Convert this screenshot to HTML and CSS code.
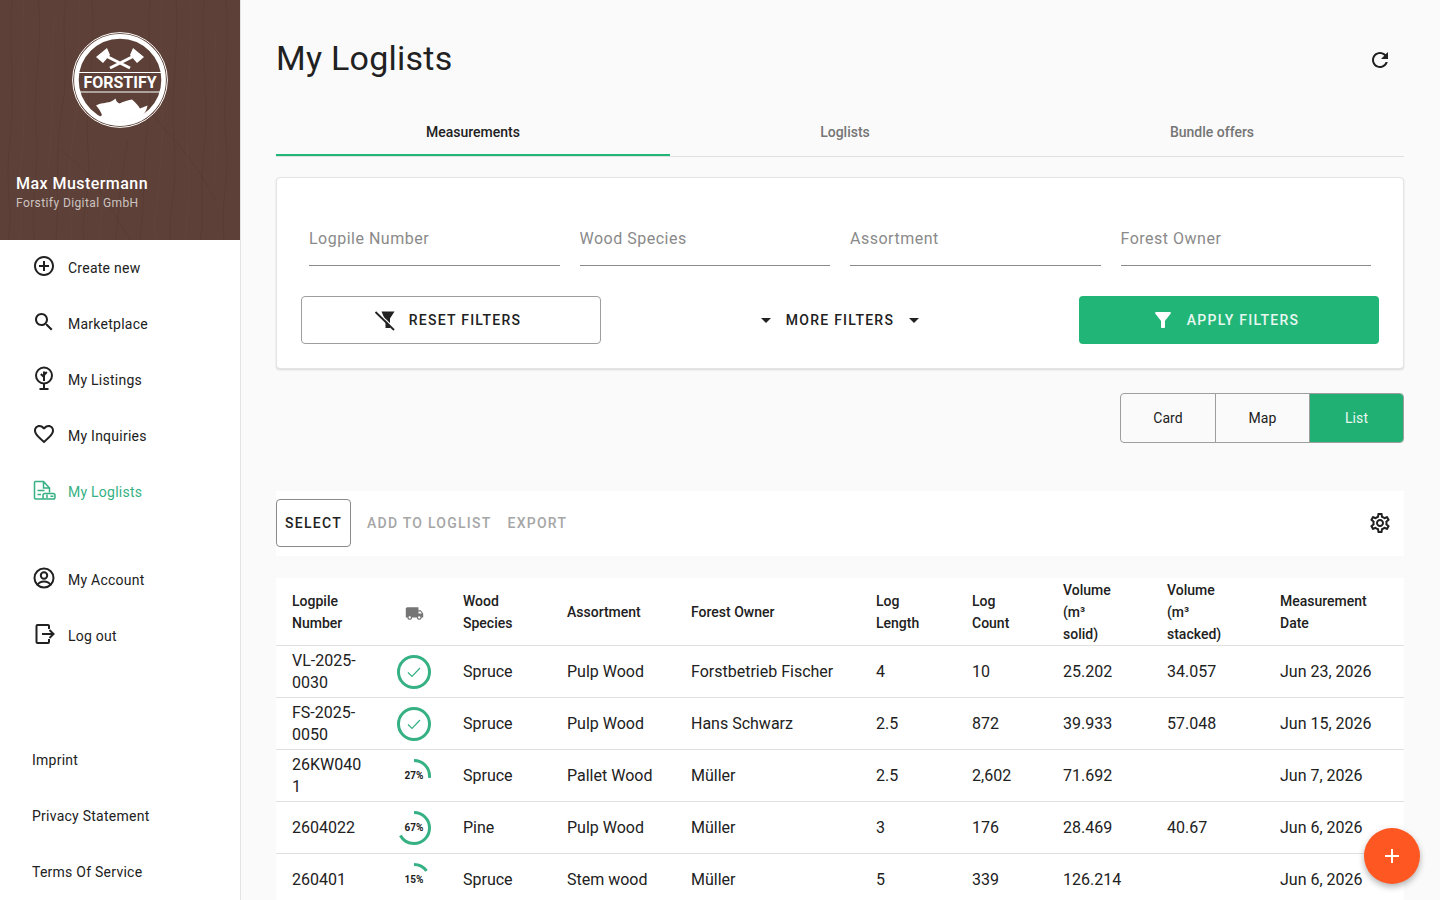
FILE: index.html
```html
<!DOCTYPE html>
<html lang="en">
<head>
<meta charset="utf-8">
<title>My Loglists</title>
<link rel="stylesheet" href="styles.css">
</head>
<body>
<div class="app">
  <aside class="sidebar">
    <header class="profile">
      <svg class="wood" viewBox="0 0 240 240" preserveAspectRatio="none" aria-hidden="true">
        <path class="grain-d" d="M12 0C8 50 16 90 10 140S14 210 8 240M38 0C44 40 32 90 36 130S30 200 34 240M66 0C60 30 70 70 62 110S60 190 56 240M92 0C96 60 84 100 88 150S80 210 84 240M128 140C122 170 118 210 116 240M150 0C146 50 154 80 148 120S146 200 140 240M176 0C180 40 170 90 174 140S168 210 170 240M204 0C200 60 210 100 204 150S206 210 200 240M226 0C230 40 222 100 226 140S220 200 224 240M60 150C90 170 100 190 130 240M150 110C170 140 190 150 215 200"/>
        <path class="grain-l" d="M24 0C20 50 28 100 22 150S24 210 20 240M54 20C50 60 56 110 48 170M80 0C76 40 82 80 74 130S70 200 72 240M112 150C104 180 100 210 100 240M162 0C158 60 166 110 160 170S154 220 156 240M190 0C194 50 184 110 188 160S184 220 186 240M216 30C212 80 220 120 214 180"/>
      </svg>
      <svg class="logo" viewBox="72 32 96 96" role="img" aria-label="Forstify logo">
        <defs><clipPath id="inner"><circle cx="120" cy="80" r="42"/></clipPath></defs>
        <circle class="logo-thin" cx="120" cy="80" r="47.400"/>
        <circle class="logo-thick" cx="120" cy="80" r="43.600"/>
        <path class="logo-fill" d="M96 57 107 48 110 55 103 63ZM144 57 133 48 130 55 137 63Z"/>
        <path class="logo-handle" d="M106 56 130 68M134 56 110 68"/>
        <path class="logo-band" clip-path="url(#inner)" d="M78 72.500H162M78 92H162"/>
        <text class="logo-text" x="120" y="88" text-anchor="middle">FORSTIFY</text>
        <path class="logo-fill" clip-path="url(#inner)" d="M96 105.500C100 103 106 103 110 102 112 101 114 100 115.500 98.500 116 101 117.500 103 119.500 103.500 123 102 127 100 132 99.500 135 102 138 105 140 108.500L147.500 105.500C147 109 145.500 112 143 115L152 128H88L102 115C100.500 111 98.500 108 96 105.500Z"/>
      </svg>
      <div class="who">
        <div class="who-name">Max Mustermann</div>
        <div class="who-org">Forstify Digital GmbH</div>
      </div>
    </header>

    <nav class="nav nav-main">
      <a class="nav-item"><svg class="ico" viewBox="0 0 24 24"><path d="M13 7h-2v4H7v2h4v4h2v-4h4v-2h-4V7zm-1-5C6.480 2 2 6.480 2 12s4.480 10 10 10 10-4.480 10-10S17.520 2 12 2zm0 18c-4.410 0-8-3.590-8-8s3.590-8 8-8 8 3.590 8 8-3.590 8-8 8z"/></svg>Create new</a>
      <a class="nav-item"><svg class="ico" viewBox="0 0 24 24"><path d="M15.500 14h-.79l-.28-.27C15.410 12.590 16 11.110 16 9.500 16 5.910 13.090 3 9.500 3S3 5.910 3 9.500 5.910 16 9.500 16c1.610 0 3.090-.59 4.230-1.570l.27.28v.79l5 4.990L20.490 19l-4.990-5zm-6 0C7.010 14 5 11.990 5 9.500S7.010 5 9.500 5 14 7.010 14 9.500 11.990 14 9.500 14z"/></svg>Marketplace</a>
      <a class="nav-item"><svg class="ico ico-line" viewBox="0 0 24 24"><circle cx="12" cy="9.500" r="8"/><path d="M12 17.500V23M7.500 23H16.500M12 15V5.500M12 11 8.800 8M12 9 14.800 6"/></svg>My Listings</a>
      <a class="nav-item"><svg class="ico" viewBox="0 0 24 24"><path d="M16.500 3c-1.740 0-3.410.81-4.500 2.090C10.910 3.810 9.240 3 7.500 3 4.420 3 2 5.420 2 8.500c0 3.780 3.400 6.860 8.550 11.540L12 21.350l1.450-1.320C18.600 15.360 22 12.280 22 8.500 22 5.420 19.580 3 16.500 3zm-4.400 15.550l-.1.100-.1-.1C7.140 14.240 4 11.390 4 8.500 4 6.500 5.500 5 7.500 5c1.540 0 3.040.99 3.570 2.360h1.870C13.460 5.990 14.960 5 16.500 5c2 0 3.500 1.500 3.500 3.500 0 2.890-3.140 5.740-7.900 10.050z"/></svg>My Inquiries</a>
      <a class="nav-item nav-active"><svg class="ico ico-line ico-green" viewBox="0 0 24 24"><path d="M11 21H3.500A1 1 0 0 1 2.500 20V4.500A1 1 0 0 1 3.500 3.500H11.500L17.500 10V14.500M11.500 3.500V10H17.500M5.500 12.500H12.500M5.500 16.500H9"/><rect x="11" y="15.500" width="12" height="5.500" rx="1.800"/><path d="M15 16.500V20M18.500 18.200H21.500"/></svg>My Loglists</a>
    </nav>

    <nav class="nav nav-account">
      <a class="nav-item"><svg class="ico ico-line" viewBox="0 0 24 24"><circle cx="12" cy="12" r="9.500"/><circle cx="12" cy="9.500" r="3.200"/><path d="M5.500 18.800C7 16.300 9.500 15.500 12 15.500S17 16.300 18.500 18.800"/></svg>My Account</a>
      <a class="nav-item"><svg class="ico ico-line" viewBox="0 0 24 24"><path d="M17 7V4A1 1 0 0 0 16 3H5.500A1 1 0 0 0 4.500 4V20A1 1 0 0 0 5.500 21H16A1 1 0 0 0 17 20V17M10 12H21.500M17.500 8 21.500 12 17.500 16"/></svg>Log out</a>
    </nav>

    <nav class="nav nav-legal">
      <a class="nav-item">Imprint</a>
      <a class="nav-item">Privacy Statement</a>
      <a class="nav-item">Terms Of Service</a>
    </nav>
  </aside>

  <main class="main">
    <header class="page-head">
      <h1 class="page-title">My Loglists</h1>
      <svg class="ico refresh" viewBox="0 0 24 24"><path d="M17.650 6.350C16.200 4.900 14.210 4 12 4c-4.420 0-7.990 3.580-7.990 8s3.570 8 7.990 8c3.730 0 6.840-2.550 7.730-6h-2.080c-.82 2.330-3.040 4-5.650 4-3.310 0-6-2.690-6-6s2.690-6 6-6c1.660 0 3.140.69 4.220 1.780L13 11h7V4l-2.350 2.350z"/></svg>
    </header>

    <div class="tabs">
      <div class="tab tab-a tab-active">Measurements</div>
      <div class="tab tab-b">Loglists</div>
      <div class="tab tab-c">Bundle offers</div>
    </div>

    <section class="filters">
      <div class="fields">
        <label class="field"><input class="field-input" placeholder="Logpile Number"></label>
        <label class="field"><input class="field-input" placeholder="Wood Species"></label>
        <label class="field"><input class="field-input" placeholder="Assortment"></label>
        <label class="field"><input class="field-input" placeholder="Forest Owner"></label>
      </div>
      <div class="filter-actions">
        <button class="btn btn-outline"><svg class="ico" viewBox="0 0 24 24"><path d="M8.500 3.500H21.500L17 10.500V20H12.500V13Z"/><path class="halo" d="M3.500 3 22 21"/><path class="slash" d="M2.500 4 21 22"/></svg>RESET FILTERS</button>
        <button class="btn btn-text"><svg class="ico" viewBox="0 0 24 24"><path d="M7 10l5 5 5-5z"/></svg>MORE FILTERS<svg class="ico" viewBox="0 0 24 24"><path d="M7 10l5 5 5-5z"/></svg></button>
        <button class="btn btn-primary"><svg class="ico" viewBox="0 0 24 24"><path d="M4.250 5.610C6.270 8.200 10 13 10 13v6c0 .55.45 1 1 1h2c.55 0 1-.45 1-1v-6s3.720-4.800 5.740-7.390C20.250 4.950 19.780 4 18.950 4H5.040c-.83 0-1.300.95-.79 1.610z"/></svg>APPLY FILTERS</button>
      </div>
    </section>

    <div class="view-row">
      <div class="toggle">
        <div class="toggle-item">Card</div>
        <div class="toggle-item">Map</div>
        <div class="toggle-item toggle-on">List</div>
      </div>
    </div>

    <div class="toolbar">
      <button class="tool-select">SELECT</button>
      <span class="tool-off">ADD TO LOGLIST</span>
      <span class="tool-off">EXPORT</span>
      <svg class="ico tool-gear" viewBox="0 0 24 24"><path d="M19.430 12.980c.04-.32.07-.64.07-.98 0-.34-.03-.66-.07-.98l2.110-1.650c.19-.15.24-.42.12-.64l-2-3.460c-.09-.16-.26-.25-.44-.25-.06 0-.12.01-.17.03l-2.490 1c-.52-.4-1.080-.73-1.690-.98l-.38-2.650C14.460 2.180 14.250 2 14 2h-4c-.25 0-.46.18-.49.42l-.38 2.650c-.61.25-1.170.59-1.690.98l-2.490-1c-.06-.02-.12-.03-.18-.03-.17 0-.34.09-.43.25l-2 3.460c-.13.22-.07.49.12.64l2.110 1.650c-.04.32-.07.65-.07.98 0 .33.03.66.07.98l-2.110 1.650c-.19.15-.24.42-.12.64l2 3.460c.09.16.26.25.44.25.06 0 .12-.01.17-.03l2.490-1c.52.4 1.080.73 1.690.98l.38 2.650c.03.24.24.42.49.42h4c.25 0 .46-.18.49-.42l.38-2.650c.61-.25 1.170-.59 1.690-.98l2.490 1c.06.02.12.03.18.03.17 0 .34-.09.43-.25l2-3.460c.12-.22.07-.49-.12-.64l-2.110-1.650zm-1.980-1.710c.04.31.05.52.05.73 0 .21-.02.43-.05.73l-.14 1.130.89.7 1.080.84-.7 1.210-1.270-.51-1.040-.42-.9.68c-.43.32-.84.56-1.250.73l-1.060.43-.16 1.130-.2 1.350h-1.400l-.19-1.350-.16-1.130-1.060-.43c-.43-.18-.83-.41-1.230-.71l-.91-.7-1.060.43-1.270.51-.7-1.210 1.080-.84.89-.7-.14-1.130c-.03-.31-.05-.54-.05-.74s.02-.43.05-.73l.14-1.130-.89-.7-1.080-.84.7-1.210 1.270.51 1.040.42.9-.68c.43-.32.84-.56 1.250-.73l1.060-.43.16-1.130.2-1.350h1.390l.19 1.350.16 1.130 1.060.43c.43.18.83.41 1.230.71l.91.7 1.060-.43 1.270-.51.7 1.210-1.070.85-.89.7.14 1.130zM12 8c-2.210 0-4 1.790-4 4s1.790 4 4 4 4-1.790 4-4-1.790-4-4-4zm0 6c-1.100 0-2-.9-2-2s.9-2 2-2 2 .9 2 2-.9 2-2 2z"/></svg>
    </div>

    <table class="grid">
      <colgroup>
        <col class="c1"><col class="c2"><col class="c3"><col class="c4"><col class="c5"><col class="c6"><col class="c7"><col class="c8"><col class="c9"><col class="c10">
      </colgroup>
      <thead>
        <tr>
          <th>Logpile Number</th>
          <th class="cell-status"><svg class="truck" viewBox="0 0 24 24"><path d="M20 8h-3V4H3c-1.100 0-2 .9-2 2v11h2c0 1.660 1.340 3 3 3s3-1.340 3-3h6c0 1.660 1.340 3 3 3s3-1.340 3-3h2v-5l-3-4zM6 18.500c-.83 0-1.500-.67-1.500-1.500s.67-1.500 1.500-1.500 1.500.67 1.500 1.500-.67 1.500-1.500 1.500zm13.500-9l1.960 2.500H17V9.500h2.500zm-1.500 9c-.83 0-1.500-.67-1.500-1.500s.67-1.500 1.500-1.500 1.500.67 1.500 1.500-.67 1.500-1.500 1.500z"/></svg></th>
          <th>Wood Species</th>
          <th>Assortment</th>
          <th>Forest Owner</th>
          <th>Log Length</th>
          <th>Log Count</th>
          <th>Volume<br>(m³<br>solid)</th>
          <th>Volume<br>(m³<br>stacked)</th>
          <th>Measurement Date</th>
        </tr>
      </thead>
      <tbody>
        <tr>
          <td>VL-2025-0030</td>
          <td class="cell-status"><svg class="ring" viewBox="0 0 34 34"><circle class="ring-full" cx="17" cy="17" r="15.500"/><path class="ring-check" d="M11 17.500 15 21.500 23 13"/></svg></td>
          <td>Spruce</td><td>Pulp Wood</td><td>Forstbetrieb Fischer</td><td>4</td><td>10</td><td>25.202</td><td>34.057</td><td>Jun 23, 2026</td>
        </tr>
        <tr>
          <td>FS-2025-0050</td>
          <td class="cell-status"><svg class="ring" viewBox="0 0 34 34"><circle class="ring-full" cx="17" cy="17" r="15.500"/><path class="ring-check" d="M11 17.500 15 21.500 23 13"/></svg></td>
          <td>Spruce</td><td>Pulp Wood</td><td>Hans Schwarz</td><td>2.5</td><td>872</td><td>39.933</td><td>57.048</td><td>Jun 15, 2026</td>
        </tr>
        <tr>
          <td>26KW0401</td>
          <td class="cell-status"><div class="progress"><svg class="ring" viewBox="0 0 34 34"><circle class="ring-arc" cx="17" cy="17" r="15.500" pathLength="100" stroke-dasharray="27 100"/></svg><span class="ring-label">27%</span></div></td>
          <td>Spruce</td><td>Pallet Wood</td><td>Müller</td><td>2.5</td><td>2,602</td><td>71.692</td><td></td><td>Jun 7, 2026</td>
        </tr>
        <tr>
          <td>2604022</td>
          <td class="cell-status"><div class="progress"><svg class="ring" viewBox="0 0 34 34"><circle class="ring-arc" cx="17" cy="17" r="15.500" pathLength="100" stroke-dasharray="67 100"/></svg><span class="ring-label">67%</span></div></td>
          <td>Pine</td><td>Pulp Wood</td><td>Müller</td><td>3</td><td>176</td><td>28.469</td><td>40.67</td><td>Jun 6, 2026</td>
        </tr>
        <tr>
          <td>260401</td>
          <td class="cell-status"><div class="progress"><svg class="ring" viewBox="0 0 34 34"><circle class="ring-arc" cx="17" cy="17" r="15.500" pathLength="100" stroke-dasharray="15 100"/></svg><span class="ring-label">15%</span></div></td>
          <td>Spruce</td><td>Stem wood</td><td>Müller</td><td>5</td><td>339</td><td>126.214</td><td></td><td>Jun 6, 2026</td>
        </tr>
      </tbody>
    </table>
  </main>

  <button class="fab" aria-label="Add"><svg viewBox="0 0 24 24"><path d="M19 13h-6v6h-2v-6H5v-2h6V5h2v6h6v2z"/></svg></button>
</div>
</body>
</html>
```
FILE: styles.css
```css
* { box-sizing: border-box; }
html, body { margin: 0; height: 100%; overflow: hidden; }
body { font-family: Roboto, "Noto Sans", sans-serif; color: #212121; background: #fafafa; }

.app { display: flex; height: 900px; overflow: hidden; position: relative; }

/* Sidebar */
.sidebar { width: 241px; flex: none; height: 900px; display: flex; flex-direction: column; background: #fff; border-right: 1px solid #e3e3e3; }
.profile { position: relative; height: 240px; flex: none; background: #5d4037; color: #fff; padding-top: 32px; display: flex; flex-direction: column; overflow: hidden; }
.wood { position: absolute; inset: 0; width: 100%; height: 100%; }
.grain-d { fill: none; stroke: rgba(0,0,0,.05); stroke-width: 1; }
.grain-l { fill: none; stroke: rgba(255,255,255,.02); stroke-width: 1.500; }
.logo { position: relative; display: block; width: 96px; height: 96px; margin: 0 auto; flex: none; }
.logo-thin { fill: none; stroke: #fff; stroke-width: 1; }
.logo-thick { fill: none; stroke: #fff; stroke-width: 4.600; }
.logo-fill { fill: #fff; }
.logo-handle { fill: none; stroke: #fff; stroke-width: 3; }
.logo-band { fill: none; stroke: #fff; stroke-width: 1.200; }
.logo-text { fill: #fff; font-family: Roboto, sans-serif; font-weight: 700; font-size: 16px; letter-spacing: 0; }
.who { position: relative; margin-top: 44px; padding-left: 16px; }
.who-name { font-size: 16px; font-weight: 500; line-height: 24px; letter-spacing: .45px; }
.who-org { font-size: 12px; line-height: 15px; letter-spacing: .4px; color: rgba(255,255,255,.7); }

.nav { display: flex; flex-direction: column; }
.nav-account { margin-top: 32px; }
.nav-legal { margin-top: auto; }
.nav-item { height: 56px; display: flex; align-items: center; padding-left: 32px; font-size: 14px; letter-spacing: .25px; color: #212121; }
.nav-item .ico { margin: 0 12px 4px 0; }
.nav-active { color: #35b183; }

.ico { width: 24px; height: 24px; flex: none; fill: #212121; display: block; }
.ico-line { fill: none; stroke: #212121; stroke-width: 2; }
.ico-green { stroke: #35b183; stroke-width: 1.500; }

/* Main */
.main { flex: 1; min-width: 0; padding: 0 36px 0 35px; }
.page-head { height: 108px; display: flex; align-items: center; justify-content: space-between; padding: 8px 12px 0 0; }
.page-title { margin: 0; font-size: 34px; font-weight: 400; letter-spacing: .25px; line-height: 40px; }
.refresh { margin-top: 4px; }

.tabs { display: flex; height: 49px; border-bottom: 1px solid #e0e0e0; }
.tab { height: 48px; display: flex; align-items: center; justify-content: center; font-size: 14px; font-weight: 500; letter-spacing: 0; color: #757575; }
.tab-a { width: 394px; }
.tab-b { width: 350px; }
.tab-c { width: 384px; }
.tab-active { color: #212121; box-shadow: inset 0 -2px 0 #21b678; }

.filters { margin-top: 20px; background: #fff; border: 1px solid #e4e4e4; border-radius: 4px; box-shadow: 0 1px 2px rgba(0,0,0,.14); padding: 34px 24px 24px; height: 192px; }
.fields { display: flex; gap: 20px; padding: 0 8px; }
.field { flex: 1; display: block; border-bottom: 1px solid #8a8a8a; height: 54px; }
.field-input { width: 100%; height: 53px; border: 0; background: transparent; outline: 0; padding: 0; font: 400 16px/24px Roboto, sans-serif; letter-spacing: .5px; color: #212121; }
.field-input::placeholder { color: #8a8a8a; opacity: 1; }

.filter-actions { display: flex; justify-content: space-between; align-items: center; margin-top: 30px; }
.btn { width: 300px; height: 48px; display: flex; align-items: center; justify-content: center; gap: 12px; border-radius: 4px; font: 500 14px/16px Roboto, sans-serif; letter-spacing: 1.250px; padding: 0; color: #212121; background: transparent; border: 0; }
.btn-outline { border: 1px solid #9e9e9e; padding-right: 8px; }
.btn-outline .halo { fill: none; stroke: #fff; stroke-width: 1.500; }
.btn-outline .slash { fill: none; stroke: #212121; stroke-width: 1.800; }
.btn-text { gap: 8px; }
.btn-primary { background: #21b678; color: #e8f7f0; padding-right: 8px; }
.btn-primary .ico { fill: #fff; }

.view-row { display: flex; justify-content: flex-end; margin-top: 24px; }
.toggle { width: 284px; height: 50px; display: flex; border: 1px solid #9e9e9e; border-radius: 4px; overflow: hidden; font-size: 14px; letter-spacing: .1px; }
.toggle-item { flex: 1 1 94px; display: flex; align-items: center; justify-content: center; border-left: 1px solid #9e9e9e; }
.toggle-item:first-child { border-left: 0; }
.toggle-on { background: #21b074; color: #e8f7f0; }

.toolbar { margin-top: 48px; height: 65px; background: #fff; display: flex; align-items: center; gap: 16px; padding: 0 12px 1px 0; }
.tool-select { width: 75px; height: 48px; padding: 0; background: transparent; border: 1px solid #8a8a8a; border-radius: 4px; font: 500 14px/16px Roboto, sans-serif; letter-spacing: 1.250px; color: #212121; }
.tool-off { font-size: 14px; font-weight: 500; letter-spacing: 1.250px; color: #a6a6a6; }
.tool-gear { margin-left: auto; }

/* Table */
.grid { margin-top: 22px; width: 1128px; border-collapse: collapse; table-layout: fixed; background: #fff; }
.c1 { width: 105px; } .c2 { width: 66px; } .c3 { width: 104px; } .c4 { width: 124px; } .c5 { width: 185px; }
.c6 { width: 96px; } .c7 { width: 91px; } .c8 { width: 104px; } .c9 { width: 113px; } .c10 { width: 140px; }
.grid th { height: 67px; padding: 1px 16px 0; text-align: left; font-size: 14px; font-weight: 500; line-height: 22px; border-bottom: 1px solid #e0e0e0; }
.grid td { height: 52px; padding: 0 16px; font-size: 16px; line-height: 22px; letter-spacing: 0; border-bottom: 1px solid #e0e0e0; overflow-wrap: anywhere; }
.grid .cell-status { padding: 1px 0 0; text-align: center; }
.grid th.cell-status { padding-top: 3px; }
.truck { width: 19px; height: 19px; fill: #757575; display: block; margin: 0 auto; }
.ring { width: 34px; height: 34px; display: block; margin: 0 auto; }
.ring-full { fill: none; stroke: #35b183; stroke-width: 3; }
.ring-check { fill: none; stroke: #35b183; stroke-width: 1.200; }
.ring-arc { fill: none; stroke: #35b183; stroke-width: 3; transform: rotate(-90deg); transform-origin: 17px 17px; }
.progress { position: relative; width: 34px; height: 34px; margin: 0 auto; }
.ring-label { position: absolute; inset: 0; display: flex; align-items: center; justify-content: center; font-size: 10px; font-weight: 700; letter-spacing: 0; color: #212121; }

.fab { position: absolute; left: 1364px; top: 828px; width: 56px; height: 56px; padding: 16px; border: 0; border-radius: 50%; background: #ff5722; box-shadow: 0 3px 6px rgba(0,0,0,.3); }
.fab svg { display: block; width: 24px; height: 24px; fill: #fff; }
```
